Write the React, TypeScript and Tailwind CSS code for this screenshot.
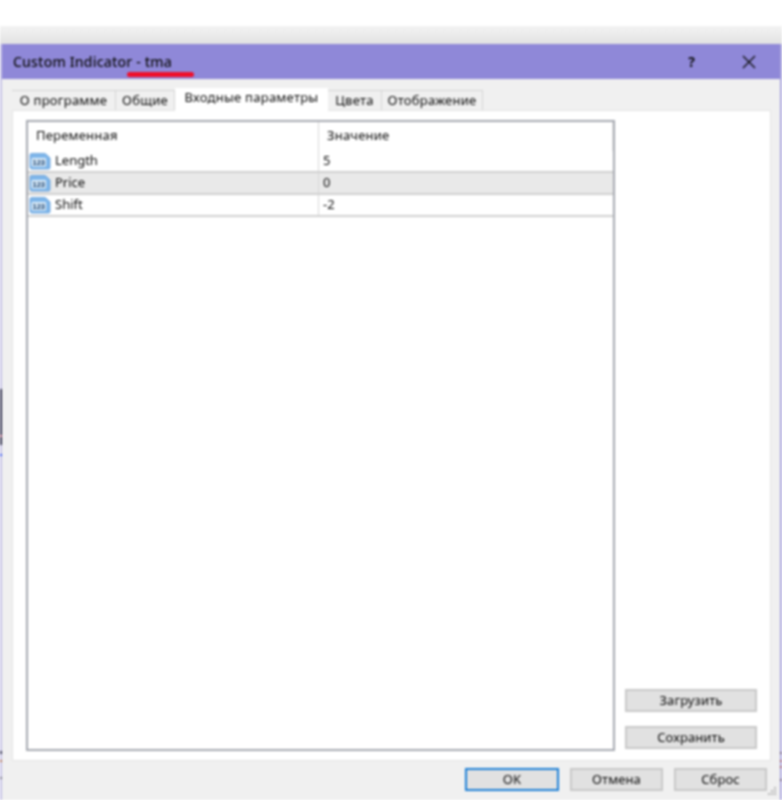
const font = "font-['Noto_Sans','Liberation_Sans',sans-serif]";

function NumIcon() {
  return (
    <svg width="22" height="18" viewBox="0 0 22 18" className="shrink-0 -mt-[1px]">
      <path d="M1 3 Q1 1.5 2.5 1.5 H15 Q16.5 1.5 17.5 2.5 L21 6 V15.5 Q21 17 19.5 17 H3 Q1 17 1 15 Z" fill="#7fb6ea" stroke="#5f9ad6" strokeWidth="0.8" />
      <rect x="2.5" y="6" width="14.5" height="8.5" rx="1" fill="#dfeefa" />
      <text x="9.8" y="12.8" textAnchor="middle" fontSize="7.5" fontWeight="700" fill="#0a3566" fontFamily="Liberation Sans, sans-serif">123</text>
    </svg>
  );
}

function Tab({ label, active, w }: { label: string; active?: boolean; w: string }) {
  return active ? (
    <div className={`${w} h-[23px] pb-[3px] bg-white flex items-center justify-center text-[13px] tracking-[0.25px] text-[#0c0c0c] -mb-px relative`}>{label}</div>
  ) : (
    <div className={`${w} h-[20px] bg-[#f0f0f0] border-t border-r border-[#d4d4d4] flex items-center justify-center text-[13px] tracking-[0.25px] text-[#0c0c0c]`}>{label}</div>
  );
}

function Row({ name, value, shaded }: { name: string; value: string; shaded?: boolean }) {
  return (
    <div className={`flex h-[22px] border-b-2 border-[#d0d0d0] ${shaded ? "bg-[#e9e9e9]" : "bg-white"}`}>
      <div className="w-[291px] flex items-center gap-[4px] pl-[1px] text-[13px] text-[#0c0c0c] border-r border-[#d8d8d8]">
        <NumIcon />
        <span>{name}</span>
      </div>
      <div className="flex-1 flex items-center pl-[4px] text-[13px] text-[#0c0c0c]">{value}</div>
    </div>
  );
}

function Btn({ label, w, focused }: { label: string; w: string; focused?: boolean }) {
  return (
    <div className={`${w} h-[23px] flex items-center justify-center text-[13px] tracking-[0.1px] text-[#0c0c0c] bg-[#e1e1e1] border-2 ${focused ? "border-[#1c7fd6]" : "border-[#c8c8c8]"}`}>{label}</div>
  );
}

export default function App() {
  return (
    <div className={`${font} relative w-[782px] h-[800px] flex flex-col bg-white overflow-hidden blur-[0.8px]`}>
      <div className="h-[26px] bg-white shrink-0" />
      <div className="h-[18px] bg-gradient-to-b from-[#f3f3f3] to-[#e2e2e2] shrink-0" />
      <div className="flex-1 flex min-h-0">
        <div className="w-[2px] bg-[#c6c2e6] shrink-0 flex flex-col">
          <div className="h-[345px] shrink-0" />
          <div className="h-[46px] shrink-0 bg-[#2c2c4c]" />
          <div className="h-[2px] shrink-0 bg-[#c0708a]" />
          <div className="h-[8px] shrink-0 bg-[#2c2c4c]" />
          <div className="h-[9px] shrink-0" />
          <div className="h-[2px] shrink-0 bg-[#3355ee]" />
          <div className="h-[295px] shrink-0" />
          <div className="h-[3px] shrink-0 bg-[#3a3a5a]" />
          <div className="h-[6px] shrink-0" />
          <div className="h-[2px] shrink-0 bg-[#b07050]" />
          <div className="h-[15px] shrink-0" />
          <div className="h-[2px] shrink-0 bg-[#77778a]" />
        </div>
        <div className="flex-1 flex flex-col bg-[#f0f0f0] min-w-0">
          <div className="relative h-[35px] shrink-0 bg-[#8f88d8] flex items-center justify-between pl-[11px] pr-[24px]">
            <span className="text-[14px] font-medium text-[#0c0c0c] tracking-[0.2px]">Custom Indicator - tma</span>
            <div className="flex items-center gap-[47px]">
              <span className="text-[14px] font-bold text-[#0c0c0c]">?</span>
              <svg width="14" height="14" viewBox="0 0 14 14"><path d="M1 1 L13 13 M13 1 L1 13" stroke="#111" strokeWidth="1.4" /></svg>
            </div>
            <div className="absolute left-[125px] top-[28px] w-[67px] h-[5px] rounded-full bg-[#f00f2a]" />
          </div>
          <div className="h-[9px] shrink-0" />
          <div className="flex items-end pl-[10px] h-[22px] shrink-0">
            <Tab label="О программе" w="w-[104px]" />
            <Tab label="Общие" w="w-[59px]" />
            <Tab label="Входные параметры" active w="w-[153px]" />
            <Tab label="Цвета" w="w-[54px]" />
            <Tab label="Отображение" w="w-[101px]" />
          </div>
          <div className="ml-[10px] mr-[9px] h-[651px] shrink-0 bg-white border border-[#e4e4e4] flex pl-[13px] pr-[13px] pt-[9px] pb-[9px] gap-[10px]">
            <div className="w-[589px] border-2 border-[#a6a9b0] bg-white flex flex-col">
              <div className="flex h-[29px] shrink-0 text-[13px] tracking-[0.2px] text-[#0c0c0c]">
                <div className="w-[291px] flex items-center pl-[8px] pb-[2px] border-r border-[#d8d8d8]">Переменная</div>
                <div className="flex-1 flex items-center pl-[8px] pb-[2px] border-r border-[#e8e8e8]">Значение</div>
              </div>
              <Row name="Length" value="5" />
              <Row name="Price" value="0" shaded />
              <Row name="Shift" value="-2" />
            </div>
            <div className="flex-1 flex flex-col justify-end gap-[14px] pb-[2px]">
              <Btn label="Загрузить" w="w-full" />
              <Btn label="Сохранить" w="w-full" />
            </div>
          </div>
          <div className="flex justify-end gap-[11px] pr-[13px] pt-[7px]">
            <Btn label="OK" w="w-[94px]" focused />
            <Btn label="Отмена" w="w-[93px]" />
            <Btn label="Сброс" w="w-[93px]" />
          </div>
        </div>
        <div className="w-[2px] bg-[#a9a4dd] shrink-0 flex flex-col">
          <div className="h-[708px] shrink-0" />
          <div className="h-[2px] shrink-0 bg-[#6a5a7a]" />
          <div className="h-[6px] shrink-0" />
          <div className="h-[2px] shrink-0 bg-[#a05a6a]" />
          <div className="h-[4px] shrink-0" />
          <div className="h-[2px] shrink-0 bg-[#a05a6a]" />
          <div className="h-[11px] shrink-0" />
          <div className="h-[2px] shrink-0 bg-[#6a5a7a]" />
        </div>
      </div>
      <svg width="12" height="12" viewBox="0 0 12 12" className="absolute left-[766px] top-[786px]" fill="#b8b8b8">
        <rect x="8" y="1" width="2" height="2" />
        <rect x="5" y="4" width="2" height="2" />
        <rect x="8" y="4" width="2" height="2" />
        <rect x="2" y="7" width="2" height="2" />
        <rect x="5" y="7" width="2" height="2" />
        <rect x="8" y="7" width="2" height="2" />
      </svg>
    </div>
  );
}
